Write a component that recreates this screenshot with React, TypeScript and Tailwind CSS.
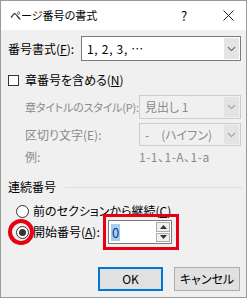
import React from 'react';

const font = "font-['Noto_Sans_CJK_JP','Noto_Sans',sans-serif] [font-feature-settings:'palt']";

function Chevron({ color }: { color: string }) {
  return (
    <svg width="9" height="6" viewBox="0 0 9 6">
      <path d="M1 1.2 L4.5 4.6 L8 1.2" fill="none" stroke={color} strokeWidth="1.1" />
    </svg>
  );
}

function Combo({ text, width, disabled, height, tracking = '' }: { text: string; width: string; disabled?: boolean; height: string; tracking?: string }) {
  return (
    <div
      className={`${width} ${height} shrink-0 flex items-stretch border ${
        disabled ? 'border-[#cccccc] bg-[#f0f0f0] text-[#8a8a8a]' : 'border-[#7a7a7a] bg-white text-black'
      }`}
    >
      <div className={`flex-1 flex items-center pl-[5px] text-[12px] leading-none whitespace-nowrap ${tracking}`}>{text}</div>
      <div
        className={`w-[15px] my-[1px] mr-[1px] flex items-center justify-center ${
          disabled ? 'bg-[#e3e3e3]' : 'bg-[#e5e5e5]'
        }`}
      >
        <Chevron color={disabled ? '#9a9a9a' : '#606060'} />
      </div>
    </div>
  );
}

function Radio({ checked }: { checked?: boolean }) {
  return (
    <div className="w-[13px] h-[13px] rounded-full border border-[#333333] bg-white flex items-center justify-center shrink-0">
      {checked && <div className="w-[7px] h-[7px] rounded-full bg-[#333333]" />}
    </div>
  );
}

export default function App() {
  return (
    <div className={`w-[250px] h-[300px] bg-white relative ${font} text-[12px] text-black leading-none`}>
      <div className="w-[247px] h-[298px] border border-[#9a9a9a] bg-[#f0f0f0] flex flex-col">
        {/* title bar */}
        <div className="h-[29px] bg-white flex items-center pl-[9px] shrink-0">
          <span className="text-[11px]">ページ番号の書式</span>
          <span className="ml-auto text-[13px] w-[12px] text-center">?</span>
          <span className="ml-[32px] mr-[12px] w-[12px] flex justify-center">
            <svg width="11" height="11" viewBox="0 0 11 11">
              <path d="M0.5 0.5 L10.5 10.5 M10.5 0.5 L0.5 10.5" stroke="#222" strokeWidth="1" />
            </svg>
          </span>
        </div>

        {/* number format */}
        <div className="flex items-center mt-[6px] pl-[7px]">
          <span className="w-[73px] shrink-0 whitespace-nowrap">番号書式(<span className="underline">F</span>):</span>
          <Combo text="1, 2, 3, …" width="w-[160px]" height="h-[25px]" tracking="tracking-[0.7px]" />
        </div>

        {/* include chapter */}
        <div className="flex items-center mt-[12px] pl-[7px] h-[14px]">
          <div className="w-[11px] h-[11px] border border-[#333333] bg-white shrink-0" />
          <span className="ml-[6px] whitespace-nowrap">章番号を含める(<span className="underline">N</span>)</span>
        </div>

        <div className="flex items-center mt-[8px] pl-[24px] text-[#8a8a8a]">
          <span className="w-[114px] shrink-0 whitespace-nowrap text-[11px] tracking-[-0.2px]">章タイトルのスタイル(P):</span>
          <Combo text="見出し 1" width="w-[102px]" height="h-[24px]" disabled />
        </div>

        <div className="flex items-center mt-[4px] pl-[24px] text-[#8a8a8a]">
          <span className="w-[114px] shrink-0 whitespace-nowrap">区切り文字(E):</span>
          <Combo text="-　(ハイフン)" width="w-[102px]" height="h-[23px]" disabled />
        </div>

        <div className="flex items-center mt-[3px] pl-[24px] h-[16px] text-[#8a8a8a]">
          <span className="w-[114px] shrink-0">例:</span>
          <span className="whitespace-nowrap tracking-[0.5px]">1-1、1-A、1-a</span>
        </div>

        {/* page numbering */}
        <div className="flex items-center mt-[14px] pl-[7px] h-[16px]">
          <span className="whitespace-nowrap">連続番号</span>
          <div className="flex-1 ml-[9px] mr-[4px] h-px bg-[#dcdcdc]" />
        </div>

        <div className="flex items-center mt-[8px] pl-[15px] h-[16px]">
          <Radio />
          <span className="ml-[4px] whitespace-nowrap">前のセクションから継続(<span className="underline">C</span>)</span>
        </div>

        <div className="flex items-center mt-[1px] pl-[15px] h-[24px]">
          <Radio checked />
          <span className="ml-[4px] w-[75px] shrink-0 whitespace-nowrap">開始番号(<span className="underline">A</span>):</span>
          <div className="w-[64px] h-[24px] border border-[#7a7a7a] bg-white flex items-stretch">
            <div className="flex-1 flex items-center pl-[2px]">
              <span className="bg-[#a8cdf0] text-[#0a3c8c] px-[1px] py-[2px] text-[13px]">0</span>
            </div>
            <div className="w-[14px] flex flex-col my-[1px] mr-[1px] gap-px">
              <div className="flex-1 border border-[#adadad] bg-[#f0f0f0] flex items-center justify-center">
                <svg width="7" height="4" viewBox="0 0 7 4"><path d="M0 4 L3.5 0 L7 4 Z" fill="#333" /></svg>
              </div>
              <div className="flex-1 border border-[#adadad] bg-[#f0f0f0] flex items-center justify-center">
                <svg width="7" height="4" viewBox="0 0 7 4"><path d="M0 0 L3.5 4 L7 0 Z" fill="#333" /></svg>
              </div>
            </div>
          </div>
        </div>

        {/* buttons */}
        <div className="flex justify-end gap-[11px] mt-auto mb-[6px] pr-[6px]">
          <button className="w-[65px] h-[24px] border-2 border-[#0078d7] bg-[#e1e1e1] text-[12px]">OK</button>
          <button className="w-[66px] h-[24px] border border-[#adadad] bg-[#e1e1e1] text-[12px]">キャンセル</button>
        </div>
      </div>

      {/* red annotations */}
      <div className="absolute left-[8px] top-[219px] w-[26px] h-[26px] rounded-full border-[4px] border-[#e60012]" />
      <div className="absolute left-[103px] top-[214px] w-[76px] h-[36px] border-[3px] border-[#e60012]" />
    </div>
  );
}
